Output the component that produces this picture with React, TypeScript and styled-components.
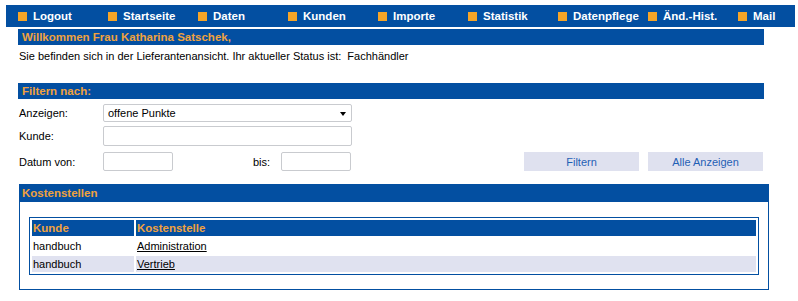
import React from "react";
import styled, { createGlobalStyle } from "styled-components";

const BLUE = "#034fa1";
const ORANGE = "#f0a23e";

const Global = createGlobalStyle`
  html, body { margin: 0; padding: 0; background: #fff; }
  body { font-family: "Liberation Sans", Arial, sans-serif; font-size: 11px; color: #000; }
`;

const Page = styled.div`
  padding: 5px 0 0 6px;
  width: 792px;
  box-sizing: border-box;
`;

const NavBar = styled.nav`
  display: flex;
  align-items: center;
  height: 22px;
  width: 789px;
  padding-left: 12px;
  box-sizing: border-box;
  background: ${BLUE};
  overflow: hidden;
`;

const NavItem = styled.a`
  display: flex;
  align-items: center;
  gap: 6px;
  flex: none;
  width: 90px;
  color: #fff;
  font-weight: bold;
  font-size: 11.5px;
  text-decoration: none;
  white-space: nowrap;
`;

const Square = styled.span`
  width: 9px;
  height: 9px;
  background: #f6a528;
  flex: none;
`;

const Content = styled.div`
  margin-left: 12px;
  width: 746px;
`;

const Bar = styled.div<{ $top: number }>`
  margin-top: ${(p) => p.$top}px;
  height: 16px;
  line-height: 16px;
  padding-left: 4px;
  background: ${BLUE};
  color: ${ORANGE};
  font-weight: bold;
  font-size: 11.5px;
`;

const StatusText = styled.p`
  margin: 5px 0 0 1px;
  line-height: 13px;
  white-space: pre;
`;

const Form = styled.div`
  margin-top: 5px;
  display: flex;
  flex-direction: column;
`;

const Row = styled.div<{ $top: number; $h: number }>`
  display: flex;
  align-items: center;
  margin-top: ${(p) => p.$top}px;
  height: ${(p) => p.$h}px;
`;

const Label = styled.label<{ $w: number }>`
  width: ${(p) => p.$w}px;
  flex: none;
  padding-left: 1px;
  box-sizing: border-box;
`;

const Field = styled.div<{ $w: number; $h: number }>`
  width: ${(p) => p.$w}px;
  height: ${(p) => p.$h}px;
  flex: none;
  box-sizing: border-box;
  border: 1px solid #c9cbcf;
  border-radius: 2px;
  background: #fff;
  display: flex;
  align-items: center;
  padding: 0 5px 0 4px;
  justify-content: space-between;
`;

const Arrow = styled.span`
  width: 0;
  height: 0;
  border-left: 3.5px solid transparent;
  border-right: 3.5px solid transparent;
  border-top: 4px solid #000;
  margin-top: 2px;
`;

const Spacer = styled.div<{ $w: number }>`
  width: ${(p) => p.$w}px;
  flex: none;
`;

const Buttons = styled.div`
  margin-left: auto;
  margin-right: 1px;
  display: flex;
  gap: 9px;
`;

const Button = styled.button`
  width: 115px;
  height: 19px;
  border: none;
  background: #dfe1ef;
  color: #1f5fb5;
  font-family: "Liberation Sans", Arial, sans-serif;
  font-size: 11px;
  padding: 0;
`;

const Box = styled.section`
  margin: 13px 0 0 1px;
  width: 750px;
  border: 1px solid ${BLUE};
  box-sizing: border-box;
  padding-bottom: 14px;
`;

const BoxHead = styled.div`
  height: 17px;
  line-height: 16px;
  padding-left: 2px;
  background: ${BLUE};
  color: ${ORANGE};
  font-weight: bold;
  font-size: 11.5px;
`;

const Table = styled.table`
  margin: 15px 0 0 9px;
  width: 730px;
  border: 1px solid ${BLUE};
  border-collapse: separate;
  border-spacing: 2px;
`;

const Th = styled.th<{ $w?: number }>`
  background: ${BLUE};
  color: ${ORANGE};
  font-weight: bold;
  font-size: 11.5px;
  text-align: left;
  height: 16px;
  padding: 0 1px;
  ${(p) => (p.$w ? `width: ${p.$w}px;` : "")}
`;

const Tr = styled.tr<{ $alt?: boolean }>`
  background: ${(p) => (p.$alt ? "#e0e2f0" : "#fff")};
`;

const Td = styled.td`
  height: 16px;
  padding: 0 1px;
  font-size: 11px;
`;

const Link = styled.a`
  color: #000;
  text-decoration: underline;
`;

const nav = ["Logout", "Startseite", "Daten", "Kunden", "Importe", "Statistik", "Datenpflege", "Änd.-Hist.", "Mail"];

const rows = [
  { kunde: "handbuch", stelle: "Administration" },
  { kunde: "handbuch", stelle: "Vertrieb" },
];

export default function App() {
  return (
    <>
      <Global />
      <Page>
        <NavBar>
          {nav.map((n) => (
            <NavItem key={n}>
              <Square />
              {n}
            </NavItem>
          ))}
        </NavBar>
        <Content>
          <Bar $top={2}>Willkommen Frau Katharina Satschek,</Bar>
          <StatusText>Sie befinden sich in der Lieferantenansicht. Ihr aktueller Status ist:  Fachhändler</StatusText>
          <Bar $top={20}>Filtern nach:</Bar>
          <Form>
            <Row $top={0} $h={18}>
              <Label $w={85}>Anzeigen:</Label>
              <Field $w={249} $h={18}>
                offene Punkte
                <Arrow />
              </Field>
            </Row>
            <Row $top={4} $h={20}>
              <Label $w={85}>Kunde:</Label>
              <Field $w={249} $h={20} />
            </Row>
            <Row $top={6} $h={19}>
              <Label $w={85}>Datum von:</Label>
              <Field $w={70} $h={19} />
              <Spacer $w={79} />
              <Label $w={29}>bis:</Label>
              <Field $w={70} $h={19} />
              <Buttons>
                <Button>Filtern</Button>
                <Button>Alle Anzeigen</Button>
              </Buttons>
            </Row>
          </Form>
          <Box>
            <BoxHead>Kostenstellen</BoxHead>
            <Table>
              <thead>
                <tr>
                  <Th $w={100}>Kunde</Th>
                  <Th>Kostenstelle</Th>
                </tr>
              </thead>
              <tbody>
                {rows.map((r, i) => (
                  <Tr key={r.stelle} $alt={i % 2 === 1}>
                    <Td>{r.kunde}</Td>
                    <Td>
                      <Link>{r.stelle}</Link>
                    </Td>
                  </Tr>
                ))}
              </tbody>
            </Table>
          </Box>
        </Content>
      </Page>
    </>
  );
}
